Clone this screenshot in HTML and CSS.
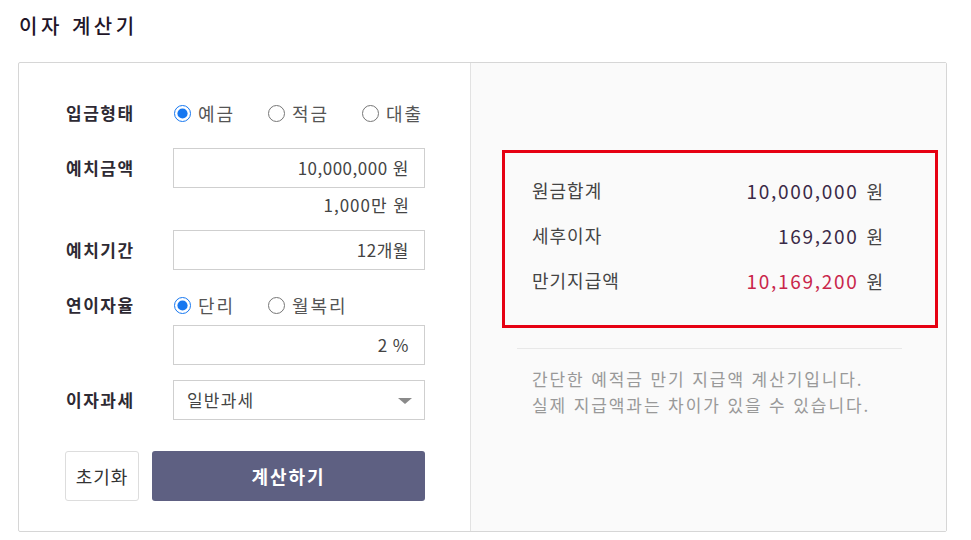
FILE: index.html
```html
<!DOCTYPE html>
<html lang="ko">
<head>
    <meta charset="UTF-8">
    <meta name="viewport" content="width=device-width, initial-scale=1.0">
    <title>이자 계산기</title>
    <link rel="stylesheet" href="styles.css">
</head>
<body>
    <h2 class="title">이자 계산기</h2>

    <div class="calc">
        <div class="calc-form">
            <div class="row">
                <span class="label">입금형태</span>
                <div class="radios">
                    <label class="radio"><input type="radio" name="kind" checked> 예금</label>
                    <label class="radio"><input type="radio" name="kind"> 적금</label>
                    <label class="radio"><input type="radio" name="kind"> 대출</label>
                </div>
            </div>

            <div class="row">
                <span class="label">예치금액</span>
                <div class="field">
                    <div class="box">10,000,000 원</div>
                    <div class="sub">1,000만 원</div>
                </div>
            </div>

            <div class="row">
                <span class="label">예치기간</span>
                <div class="field">
                    <div class="box">12개월</div>
                </div>
            </div>

            <div class="row">
                <span class="label">연이자율</span>
                <div class="field">
                    <div class="radios">
                        <label class="radio"><input type="radio" name="rate" checked> 단리</label>
                        <label class="radio"><input type="radio" name="rate"> 월복리</label>
                    </div>
                    <div class="box">2 %</div>
                </div>
            </div>

            <div class="row">
                <span class="label">이자과세</span>
                <div class="field">
                    <div class="select-wrap">
                        <div class="box select">일반과세</div>
                        <span class="arrow"></span>
                    </div>
                </div>
            </div>

            <div class="buttons">
                <button class="btn-reset">초기화</button>
                <button class="btn-calc">계산하기</button>
            </div>
        </div>

        <div class="calc-result">
            <div class="result-box">
                <div class="result-row">
                    <span>원금합계</span>
                    <span class="value">10,000,000 <small>원</small></span>
                </div>
                <div class="result-row">
                    <span>세후이자</span>
                    <span class="value">169,200 <small>원</small></span>
                </div>
                <div class="result-row">
                    <span>만기지급액</span>
                    <span class="value total">10,169,200 <small>원</small></span>
                </div>
            </div>
            <hr class="divider">
            <p class="note">간단한 예적금 만기 지급액 계산기입니다.<br>실제 지급액과는 차이가 있을 수 있습니다.</p>
        </div>
    </div>
</body>
</html>
```

FILE: styles.css
```css
body {
    font-family: 'Noto Sans CJK KR', 'Noto Sans', sans-serif;
    margin: 0;
    padding: 0 24px 0 18px;
    background-color: #fff;
    color: #333;
}

.title {
    margin: 0;
    padding: 12px 0 0 1px;
    height: 50px;
    font-size: 20px;
    font-weight: 500;
    letter-spacing: 3.5px;
    line-height: 28px;
    color: #1f1628;
}

.calc {
    display: flex;
    width: 927px;
    height: 468px;
    border: 1px solid #d6d6d6;
    border-radius: 2px;
}

.calc-form {
    width: 452px;
    box-sizing: border-box;
    padding: 30px 0 0 47px;
    border-right: 1px solid #e2e2e2;
    display: flex;
    flex-direction: column;
}

.row {
    display: flex;
    margin-bottom: 15px;
}

.label {
    width: 107px;
    flex-shrink: 0;
    font-size: 17px;
    font-weight: 700;
    letter-spacing: 1.5px;
    line-height: 40px;
    color: #2e2a33;
}

.field {
    width: 252px;
}

.radios {
    display: flex;
    height: 40px;
    align-items: center;
}

.radio {
    display: flex;
    align-items: center;
    width: 94px;
    font-size: 18px;
    letter-spacing: 2px;
    color: #555;
}

.radio input {
    width: 17px;
    height: 17px;
    margin: 0 7px 0 1px;
    accent-color: #1677f0;
}

.box {
    height: 40px;
    box-sizing: border-box;
    border: 1px solid #cfcfcf;
    padding: 0 15px;
    font-size: 17px;
    letter-spacing: 0.5px;
    line-height: 38px;
    text-align: right;
    color: #444;
}

.sub {
    margin-top: 4px;
    height: 26px;
    line-height: 26px;
    padding-right: 15px;
    font-size: 17px;
    letter-spacing: 1px;
    text-align: right;
    color: #444;
    margin-bottom: -3px;
}

.select-wrap {
    position: relative;
}

.select {
    text-align: left;
    padding-left: 13px;
    letter-spacing: 1.2px;
}

.arrow {
    position: absolute;
    right: 13px;
    top: 18px;
    border-left: 7px solid transparent;
    border-right: 7px solid transparent;
    border-top: 6px solid #8a8a8a;
}

.buttons {
    display: flex;
    gap: 13px;
    margin: 16px 0 0 -1px;
}

.btn-reset {
    width: 74px;
    height: 50px;
    background-color: #fff;
    border: 1px solid #ddd;
    border-radius: 3px;
    font-family: inherit;
    font-size: 18px;
    letter-spacing: 1px;
    color: #333;
    padding: 0;
}

.btn-calc {
    width: 273px;
    height: 50px;
    background-color: #5e6082;
    border: none;
    border-radius: 3px;
    font-family: inherit;
    font-size: 18px;
    font-weight: 700;
    letter-spacing: 2px;
    color: #fff;
}

.calc-result {
    flex: 1;
    background-color: #fafafa;
    padding: 87px 0 0 31px;
}

.result-box {
    width: 436px;
    border: 3px solid #e60012;
    padding: 15px 52px 22px 27px;
    box-sizing: border-box;
    background-color: #fafafa;
}

.result-row {
    display: flex;
    justify-content: space-between;
    height: 45px;
    line-height: 45px;
    font-size: 18px;
    letter-spacing: 1px;
    color: #444;
}

.value {
    font-size: 19px;
    letter-spacing: 1.7px;
    color: #3a2a48;
}

.value small {
    font-size: 18px;
    letter-spacing: 0;
    color: #444;
    margin-left: 1px;
}

.value.total {
    color: #c9264b;
}

.divider {
    width: 385px;
    margin: 20px 0 0 15px;
    border: none;
    border-top: 1px solid #e8e8e8;
}

.note {
    margin: 17px 0 0 30px;
    font-size: 17px;
    letter-spacing: 1.9px;
    line-height: 26px;
    color: #999;
}
```
